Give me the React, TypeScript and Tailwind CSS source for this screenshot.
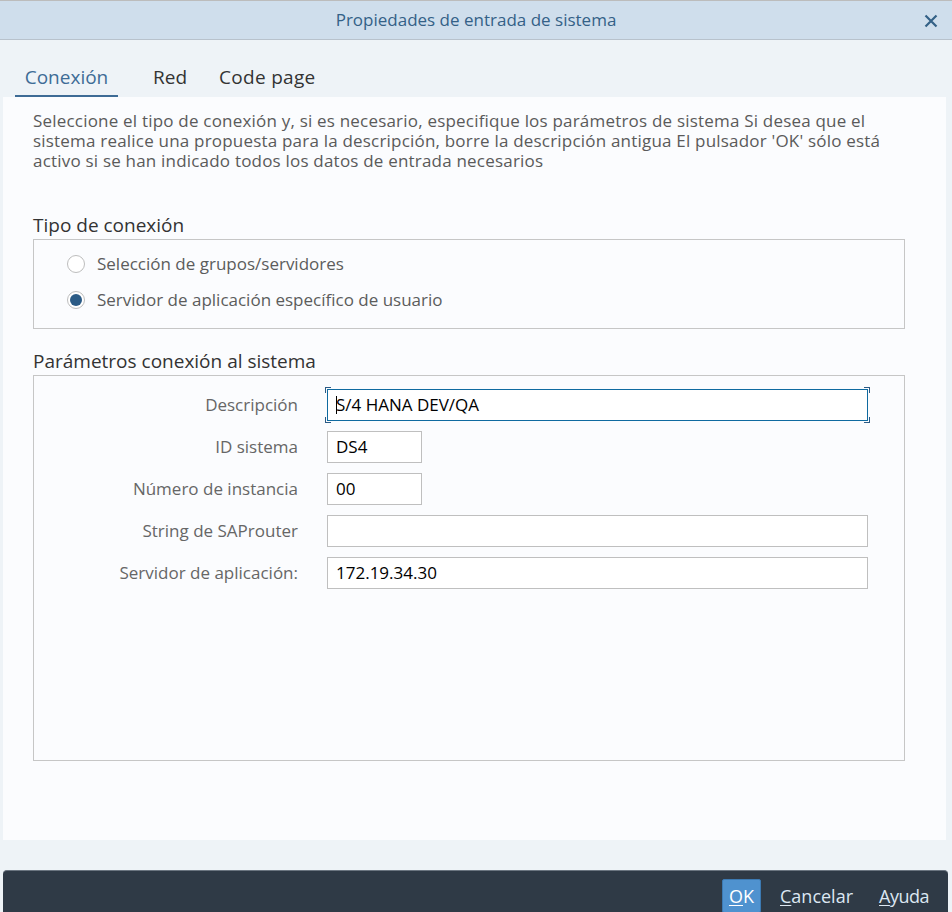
import React from "react";

const font = { fontFamily: '"Open Sans", "Liberation Sans", sans-serif' };

function Radio({ checked, label }: { checked?: boolean; label: string }) {
  return (
    <div className="flex items-center h-[36px]">
      <span className="w-[18px] h-[18px] rounded-full border border-[#bdbdbd] bg-white flex items-center justify-center">
        {checked && <span className="w-[12px] h-[12px] rounded-full bg-[#2b5b86]" />}
      </span>
      <span className="ml-[12px] text-[17px] text-[#5c5c5c]">{label}</span>
    </div>
  );
}

function Field({
  label,
  value,
  small,
  focused,
}: {
  label: string;
  value?: string;
  small?: boolean;
  focused?: boolean;
}) {
  return (
    <div className="flex items-center h-[32px]">
      <div className="w-[264px] text-right text-[17px] text-[#666666]">{label}</div>
      <div className={`relative ml-[29px] h-[32px] ${small ? "w-[95px]" : "w-[541px]"}`}>
        <div
          className={`h-full w-full bg-white border ${
            focused ? "border-[#0f6aa0]" : "border-[#bfbfbf]"
          } flex items-center pl-[8px] text-[17px] text-black`}
        >
          {focused && <span className="w-px h-[18px] bg-black mr-[-1px]" />}
          {value}
        </div>
        {focused && (
          <>
            <span className="absolute -left-[2px] -top-[2px] w-[6px] h-[6px] border-l border-t border-[#2b5b86]" />
            <span className="absolute -left-[2px] -bottom-[2px] w-[6px] h-[6px] border-l border-b border-[#2b5b86]" />
            <span className="absolute -right-[2px] -top-[2px] w-[6px] h-[6px] border-r border-t border-[#2b5b86]" />
            <span className="absolute -right-[2px] -bottom-[2px] w-[6px] h-[6px] border-r border-b border-[#2b5b86]" />
          </>
        )}
      </div>
    </div>
  );
}

export default function App() {
  return (
    <div className="w-[952px] h-[912px] bg-[#eef3f7] flex flex-col overflow-hidden" style={font}>
      {/* Title bar */}
      <div className="h-[40px] shrink-0 bg-[#cfdeec] border-t border-[#bcbcbc] border-b border-b-[#b8c2cc] relative flex items-center justify-center">
        <span className="text-[17px] text-[#346187]">Propiedades de entrada de sistema</span>
        <svg
          className="absolute right-[14px] top-[13px]"
          width="14"
          height="14"
          viewBox="0 0 14 14"
        >
          <path d="M1.5 1.5 L12.5 12.5 M12.5 1.5 L1.5 12.5" stroke="#346187" strokeWidth="2.2" />
        </svg>
      </div>

      {/* Tabs */}
      <div className="h-[57px] shrink-0 flex items-end pl-[15px]">
        <div className="w-[103px] h-[45px] flex items-start justify-center border-b-2 border-[#3d6b95]">
          <span className="text-[19px] text-[#3e6c96] leading-[26px] mt-[12px]">Conexión</span>
        </div>
        <div className="h-[45px] ml-[35px] flex items-start">
          <span className="text-[19px] text-[#333333] leading-[26px] mt-[12px]">Red</span>
        </div>
        <div className="h-[45px] ml-[32px] flex items-start">
          <span className="text-[19px] text-[#333333] leading-[26px] mt-[12px] tracking-[0.3px]">Code page</span>
        </div>
      </div>

      {/* Panel */}
      <div className="ml-[3px] mr-[6px] h-[743px] shrink-0 bg-[#fbfcfe] pt-[14px] pl-[30px] pr-[41px]">
        <p className="text-[17px] leading-[20px] text-[#5a5a5a] tracking-[0.2px]">
          Seleccione el tipo de conexión y, si es necesario, especifique los parámetros de sistema Si desea que
          el sistema realice una propuesta para la descripción, borre la descripción antigua El pulsador 'OK'
          sólo está activo si se han indicado todos los datos de entrada necesarios
        </p>

        <h2 className="mt-[42px] text-[19px] leading-[24px] text-[#333333]">Tipo de conexión</h2>
        <div className="mt-[2px] h-[90px] border border-[#c6c6c6] pl-[33px] pt-[6px]">
          <Radio label="Selección de grupos/servidores" />
          <Radio checked label="Servidor de aplicación específico de usuario" />
        </div>

        <h2 className="mt-[20px] text-[19px] leading-[24px] text-[#333333]">Parámetros conexión al sistema</h2>
        <div className="mt-[2px] h-[386px] border border-[#c6c6c6] pt-[13px] flex flex-col gap-[10px]">
          <Field label="Descripción" value="S/4 HANA DEV/QA" focused />
          <Field label="ID sistema" value="DS4" small />
          <Field label="Número de instancia" value="00" small />
          <Field label="String de SAProuter" value="" />
          <Field label="Servidor de aplicación:" value="172.19.34.30" />
        </div>
      </div>

      {/* Footer */}
      <div className="mt-[30px] ml-[3px] mr-[4px] h-[42px] shrink-0 bg-[#2f3a46] rounded-t-[4px] border-t border-[#6b7580] flex items-start justify-end pr-[19px] pt-[8px]">
        <button className="h-[34px] w-[39px] bg-[#4f92cf] border border-[#3c7ab3] rounded-[2px] text-[18px] text-white leading-[30px]">
          <span className="underline underline-offset-2">O</span>K
        </button>
        <button className="h-[34px] ml-[19px] text-[18px] text-[#dce7f2] leading-[30px]">
          <span className="underline underline-offset-2">C</span>ancelar
        </button>
        <button className="h-[34px] ml-[26px] text-[18px] text-[#dce7f2] leading-[30px] tracking-[-0.5px]">
          <span className="underline underline-offset-2">A</span>yuda
        </button>
      </div>
    </div>
  );
}
